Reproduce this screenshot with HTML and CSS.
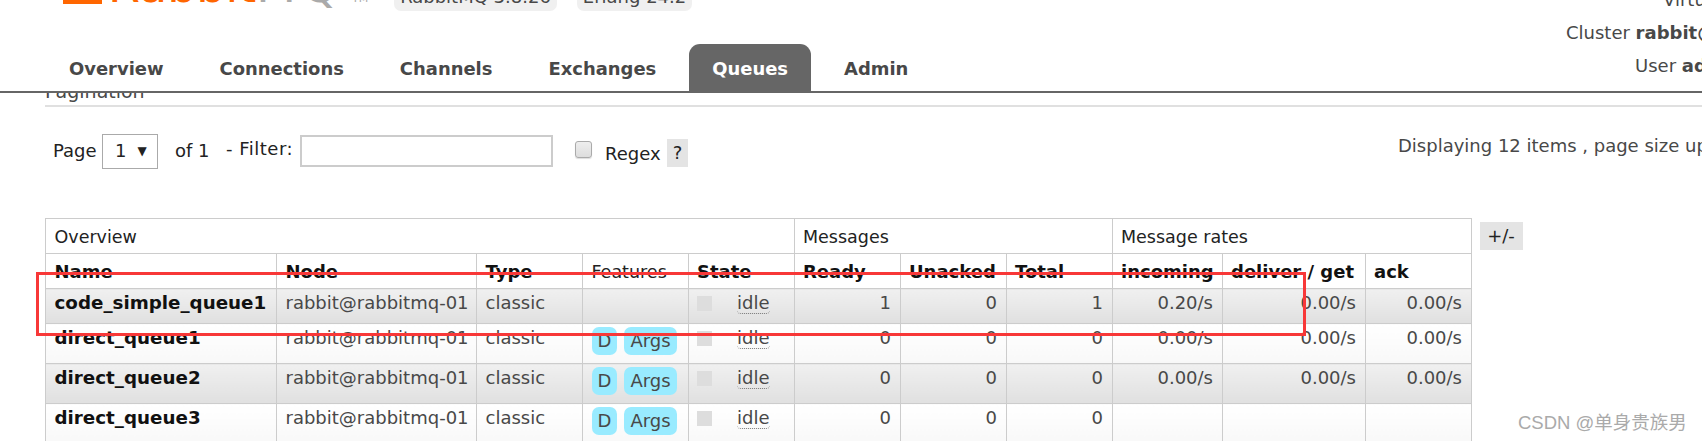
FILE: index.html
```html
<!DOCTYPE html>
<html lang="en">
<head>
<meta charset="utf-8">
<title>RabbitMQ Management</title>
<link rel="stylesheet" href="styles.css">
</head>
<body>
<header class="header">
  <div class="brand">
    <div class="logo"><span class="logo-bar"></span><span class="logo-word">Rabbit<span class="logo-mq">MQ</span></span><span class="logo-tm">TM</span></div>
    <span class="pill">RabbitMQ 3.8.26</span>
    <span class="pill pill-erlang">Erlang 24.2</span>
  </div>
  <nav class="nav">
    <a class="tab">Overview</a>
    <a class="tab">Connections</a>
    <a class="tab">Channels</a>
    <a class="tab">Exchanges</a>
    <a class="tab tab-active">Queues</a>
    <a class="tab">Admin</a>
  </nav>
  <div class="meta">
    <div class="meta-virtual">Virtual host</div>
    <div class="meta-cluster">Cluster <b>rabbit@rabbitmq-01</b></div>
    <div class="meta-user">User <b>admin</b></div>
  </div>
</header>
<main class="content">
  <h3 class="section-title">Pagination</h3>
  <div class="filter-row">
    <label class="page-label">Page</label>
    <div class="select"><span>1</span><span class="caret">▼</span></div>
    <span class="of">of 1</span>
    <span class="filter-label">- Filter:</span>
    <input class="filter-input" type="text">
    <input class="regex-check" type="checkbox">
    <span class="regex-label">Regex</span>
    <span class="help">?</span>
    <span class="displaying">Displaying 12 items , page size up to: 100</span>
  </div>
  <div class="table-row">
    <table class="queues">
      <colgroup>
        <col class="c-name"><col class="c-node"><col class="c-type"><col class="c-feat"><col class="c-state">
        <col class="c-ready"><col class="c-unacked"><col class="c-total">
        <col class="c-in"><col class="c-del"><col class="c-ack">
      </colgroup>
      <thead>
        <tr class="group-row">
          <th colspan="5">Overview</th>
          <th colspan="3">Messages</th>
          <th colspan="3">Message rates</th>
        </tr>
        <tr class="head-row">
          <th>Name</th><th>Node</th><th>Type</th><th class="plain">Features</th><th>State</th>
          <th>Ready</th><th>Unacked</th><th>Total</th>
          <th>incoming</th><th>deliver / get</th><th>ack</th>
        </tr>
      </thead>
      <tbody>
        <tr class="odd short">
          <td class="name">code_simple_queue1</td><td>rabbit@rabbitmq-01</td><td>classic</td><td></td>
          <td class="state"><span class="dot"></span><abbr>idle</abbr></td>
          <td class="num">1</td><td class="num">0</td><td class="num">1</td>
          <td class="num">0.20/s</td><td class="num">0.00/s</td><td class="num">0.00/s</td>
        </tr>
        <tr class="even">
          <td class="name">direct_queue1</td><td>rabbit@rabbitmq-01</td><td>classic</td>
          <td class="features"><span class="tag tag-d">D</span><span class="tag">Args</span></td>
          <td class="state"><span class="dot"></span><abbr>idle</abbr></td>
          <td class="num">0</td><td class="num">0</td><td class="num">0</td>
          <td class="num">0.00/s</td><td class="num">0.00/s</td><td class="num">0.00/s</td>
        </tr>
        <tr class="odd">
          <td class="name">direct_queue2</td><td>rabbit@rabbitmq-01</td><td>classic</td>
          <td class="features"><span class="tag tag-d">D</span><span class="tag">Args</span></td>
          <td class="state"><span class="dot"></span><abbr>idle</abbr></td>
          <td class="num">0</td><td class="num">0</td><td class="num">0</td>
          <td class="num">0.00/s</td><td class="num">0.00/s</td><td class="num">0.00/s</td>
        </tr>
        <tr class="even">
          <td class="name">direct_queue3</td><td>rabbit@rabbitmq-01</td><td>classic</td>
          <td class="features"><span class="tag tag-d">D</span><span class="tag">Args</span></td>
          <td class="state"><span class="dot"></span><abbr>idle</abbr></td>
          <td class="num">0</td><td class="num">0</td><td class="num">0</td>
          <td class="num"></td><td class="num"></td><td class="num"></td>
        </tr>
      </tbody>
    </table>
    <span class="plus-minus">+/-</span>
  </div>
</main>
<div class="annotation"></div>
<div class="watermark">CSDN @单身贵族男</div>
</body>
</html>
```
FILE: styles.css
```css
* { box-sizing: border-box; }
html, body { margin: 0; height: 441px; overflow: hidden; background: #fff; }
body { font-family: "DejaVu Sans", Verdana, sans-serif; font-size: 18px; color: #484848; position: relative; }

.header { position: absolute; left: 0; top: 0; width: 100%; height: 93px; background: #fff; border-bottom: 2px solid #666; z-index: 2; overflow: hidden; }
.brand { display: flex; align-items: flex-end; height: 11px; }
.logo { position: relative; width: 394px; height: 11px; overflow: hidden; flex: none; }
.logo-bar { position: absolute; left: 63px; top: -20px; width: 39px; height: 24px; background: #f60; }
.logo-word { position: absolute; left: 108px; bottom: 2px; font-size: 46px; line-height: 46px; color: #f60; white-space: nowrap; }
.logo-mq { color: #aaa; letter-spacing: 6px; }
.logo-tm { position: absolute; left: 352px; bottom: 7px; font-size: 11px; line-height: 11px; color: #aaa; }
.pill { height: 24px; background: #f0f0f0; border-radius: 0 0 7px 7px; line-height: 20px; white-space: nowrap; width: 163px; text-align: center; flex: none; overflow: hidden; }
.pill-erlang { margin-left: 20px; width: 115px; }

.nav { position: absolute; left: 0; top: 44px; height: 47px; width: 100%; display: flex; gap: 10px; padding-left: 46px; }
.tab { display: block; padding: 14px 23px 0; font-weight: 700; font-size: 17.95px; color: #484848; line-height: 22px; border-radius: 11px 11px 0 0; white-space: nowrap; }
.tab-active { background: #666; color: #fff; }

.meta { position: absolute; right: 0; top: 0; width: 100%; height: 91px; pointer-events: none; }
.meta > div { position: absolute; white-space: nowrap; line-height: 22px; }
.meta-virtual { left: 1663px; top: -11px; }
.meta-cluster { left: 1566px; top: 22px; }
.meta-user { left: 1635px; top: 55px; }

.content { padding: 81px 0 0 45px; width: 1702px; }
.section-title { margin: 0; font-weight: 400; font-size: 19px; color: #484848; line-height: 20px; border-bottom: 2px solid #e0e0e0; height: 26px; }

.filter-row { position: relative; height: 111px; display: flex; align-items: flex-start; color: #222; }
.page-label { margin: 33px 0 0 8px; width: 49px; line-height: 22px; }
.select { margin-top: 27px; width: 56px; height: 35px; border: 1px solid #aaa; display: flex; align-items: center; padding: 0 0 2px 12px; gap: 11px; }
.caret { font-size: 12px; }
.of { margin: 33px 0 0 17px; width: 51px; line-height: 22px; }
.filter-label { margin-top: 31px; width: 74px; line-height: 22px; letter-spacing: .5px; }
.filter-input { margin: 28px 0 0; width: 253px; height: 32px; border: 2px solid #ccc; background: #fff; }
.regex-check { appearance: none; margin: 34px 0 0 22px; width: 17px; height: 17px; border: 1px solid #aaa; border-radius: 3px; background: linear-gradient(#eee, #ddd); box-shadow: 0 1px 1px #ddd; }
.regex-label { margin: 36px 0 0 13px; width: 62px; line-height: 22px; }
.help { margin-top: 32px; width: 21px; height: 28px; background: #e4e4e4; text-align: center; line-height: 28px; }
.displaying { position: absolute; left: 1353px; top: 28px; color: #484848; white-space: nowrap; line-height: 22px; }

.table-row { display: flex; align-items: flex-start; }
.queues { width: 1426px; table-layout: fixed; border-collapse: collapse; border: 1px solid #ccc; flex: none; }
.c-name { width: 231px; } .c-node { width: 200px; } .c-type { width: 106px; } .c-feat { width: 105.5px; } .c-state { width: 106px; }
.c-ready { width: 106px; } .c-unacked { width: 106px; } .c-total { width: 106px; }
.c-in { width: 110px; } .c-del { width: 143px; } .c-ack { width: 106px; }
th, td { border: 1px solid #ccc; padding: 3px 8.5px 0; text-align: left; white-space: nowrap; overflow: hidden; vertical-align: top; line-height: 22px; }
.group-row th { height: 35px; font-weight: 400; color: #222; font-size: 17.5px; padding-top: 7px; }
.head-row th { height: 35px; font-weight: 700; color: #111; padding-top: 7px; }
.head-row th.plain { font-weight: 400; color: #222; font-size: 17.5px; }
tbody tr { height: 40px; }
tbody tr.short { height: 35px; }
.odd td { background: linear-gradient(#f0f0f0, #e0e0e0); }
.even td { background: linear-gradient(#fff, #f8f8f8); }
td.name { font-weight: 700; color: #111; font-size: 18.3px; }
td.num { text-align: right; }
.dot { display: inline-block; width: 15px; height: 15px; background: #ddd; vertical-align: top; margin-top: 4px; }
abbr { margin-left: 25px; border-bottom: 1px dotted #777; border-radius: 0 0 4px 4px; }
.tag { display: inline-block; height: 28px; line-height: 28px; padding: 0 6px; background: #99ebff; border-radius: 7px; color: #484848; vertical-align: top; }
.tag-d { margin-right: 7px; }
.plus-minus { margin: 4px 0 0 8px; width: 43px; height: 28px; background: #e4e4e4; color: #222; text-align: center; line-height: 28px; flex: none; }

.annotation { position: absolute; left: 36px; top: 272px; width: 1270px; height: 64px; border: 3px solid #f83838; z-index: 1; }
.watermark { position: absolute; left: 1518px; top: 411px; font-size: 18.5px; line-height: 24px; color: #aaa; font-family: "Liberation Sans", "Noto Sans CJK SC", sans-serif; z-index: 3; white-space: nowrap; }
```
